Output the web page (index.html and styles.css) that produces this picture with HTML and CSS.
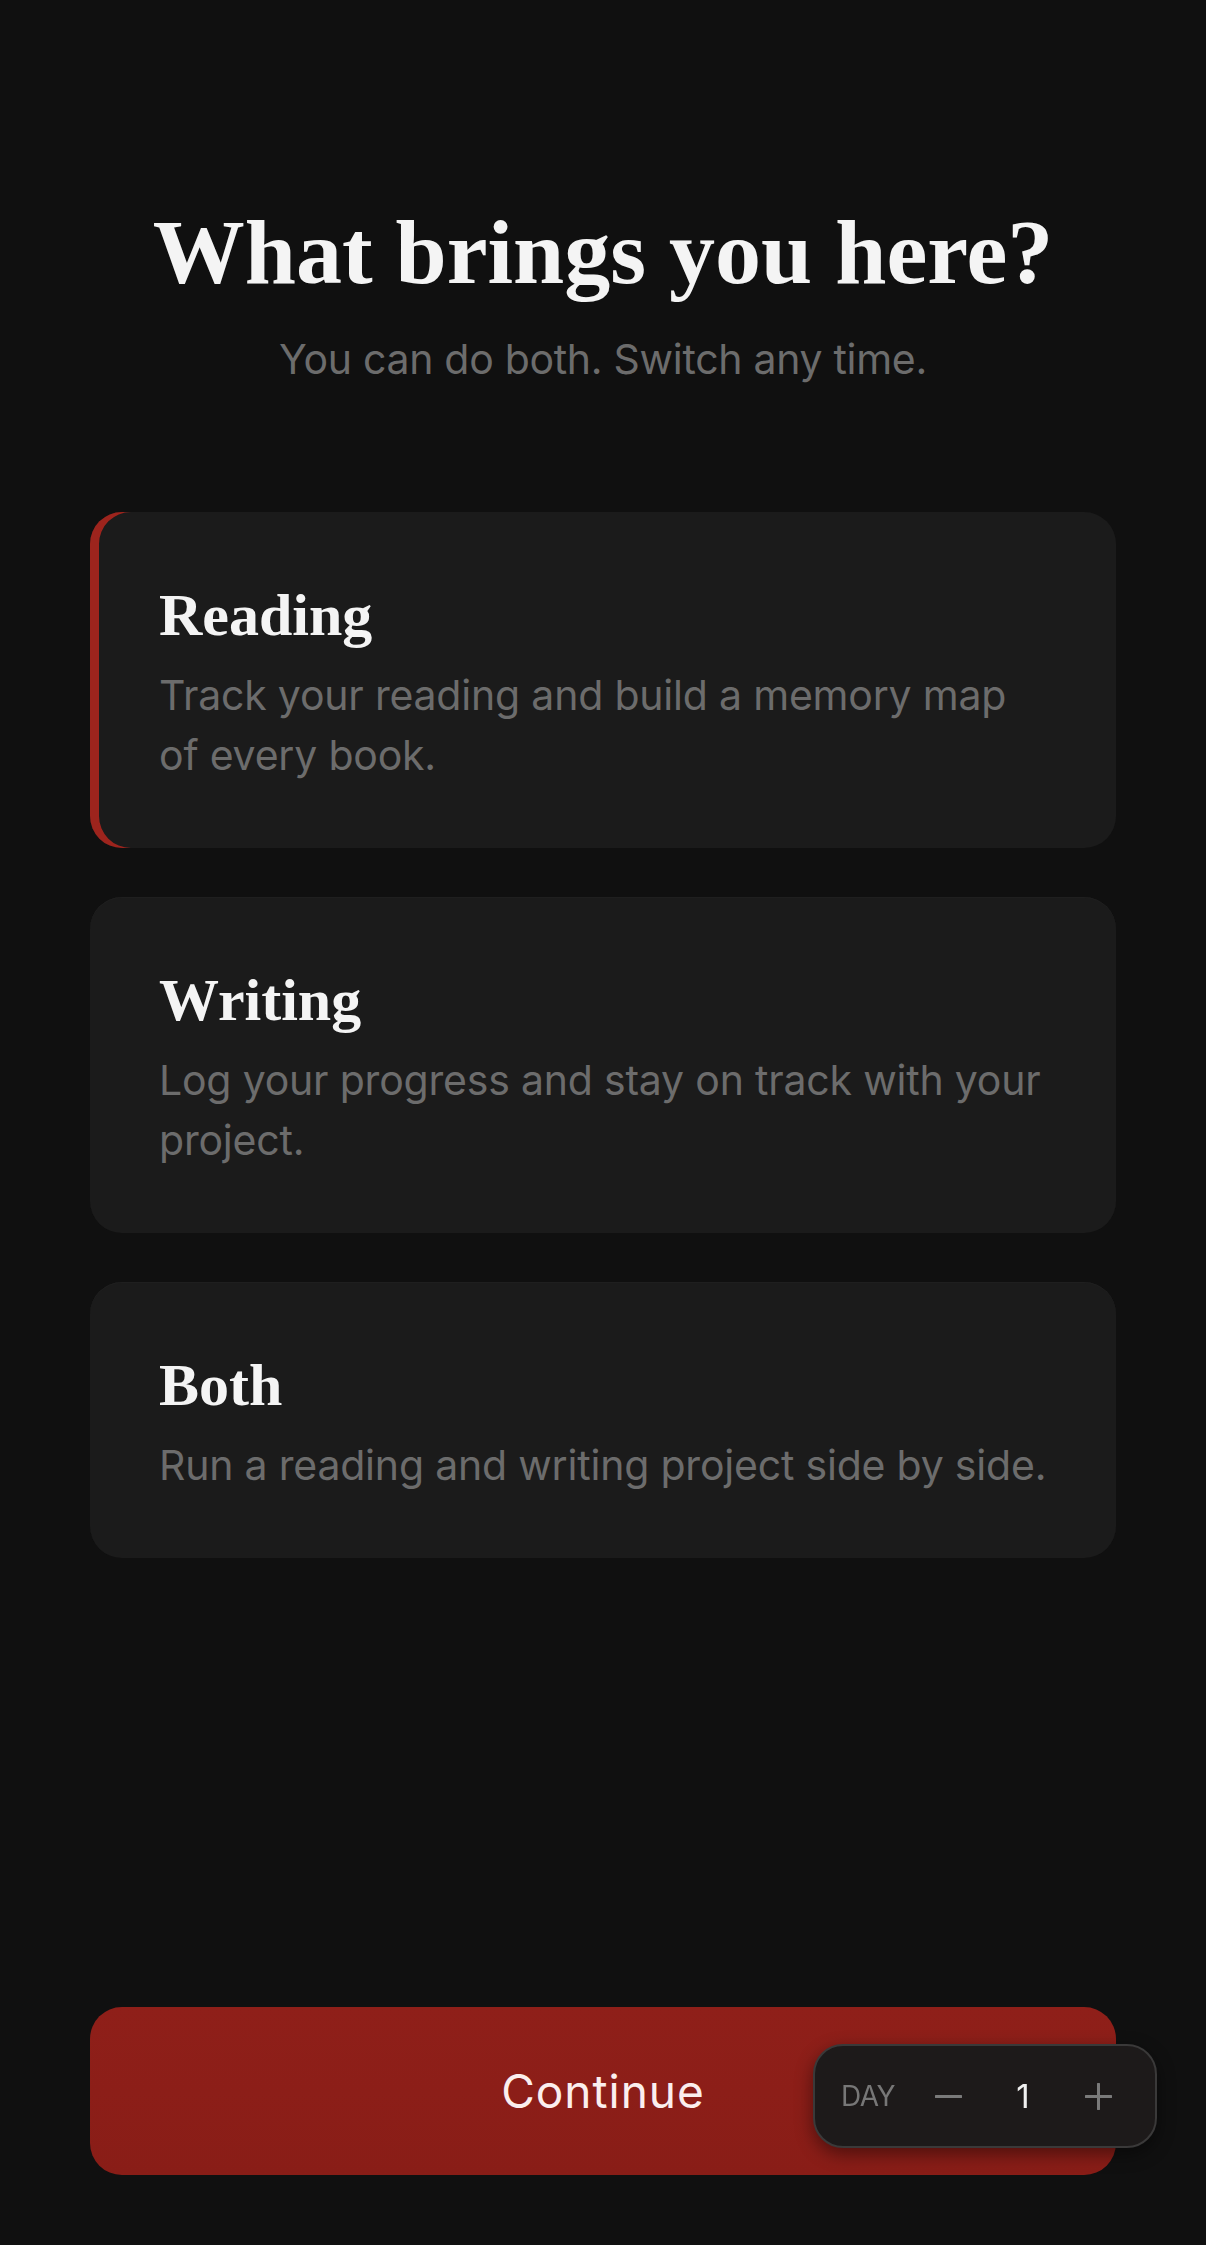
FILE: index.html
```html
<!DOCTYPE html>
<html lang="en">
<head>
    <meta charset="UTF-8">
    <meta name="viewport" content="width=device-width, initial-scale=1.0">
    <title>Onboarding</title>
    <link rel="stylesheet" href="styles.css">
</head>
<body>
    <main class="screen">
        <header class="intro">
            <h1>What brings you here?</h1>
            <p>You can do both. Switch any time.</p>
        </header>

        <div class="options">
            <div class="option selected">
                <h2>Reading</h2>
                <p>Track your reading and build a memory map of every book.</p>
            </div>
            <div class="option">
                <h2>Writing</h2>
                <p>Log your progress and stay on track with your project.</p>
            </div>
            <div class="option">
                <h2>Both</h2>
                <p>Run a reading and writing project side by side.</p>
            </div>
        </div>

        <button class="continue">Continue</button>
    </main>

    <div class="day-picker">
        <span class="day-label">DAY</span>
        <button class="step" aria-label="Previous day">
            <svg width="27" height="27" viewBox="0 0 27 27"><path d="M1 13.5h25" stroke="currentColor" stroke-width="3" stroke-linecap="round"/></svg>
        </button>
        <span class="day-value">1</span>
        <button class="step" aria-label="Next day">
            <svg width="27" height="27" viewBox="0 0 27 27"><path d="M1 13.5h25M13.5 1v25" stroke="currentColor" stroke-width="3" stroke-linecap="round"/></svg>
        </button>
    </div>
</body>
</html>
```

FILE: styles.css
```css
:root {
    --bg-color: #101010;
    --card-bg: #1b1b1b;
    --accent: #8e1f19;
    --accent-line: #9d241d;
    --title-color: #f4f4f4;
    --muted: #6c6c6c;
}

* {
    margin: 0;
    padding: 0;
    box-sizing: border-box;
}

body {
    background-color: var(--bg-color);
    color: var(--title-color);
    font-family: Inter, "Noto Sans", sans-serif;
}

.screen {
    min-height: 100vh;
    display: flex;
    flex-direction: column;
    padding: 203px 90px 70px;
}

.intro {
    text-align: center;
}

.intro h1 {
    font-family: "Liberation Serif", "DejaVu Serif", serif;
    font-weight: 700;
    font-size: 92px;
    line-height: 99px;
    color: var(--title-color);
}

.intro p {
    margin-top: 28px;
    font-size: 41px;
    line-height: 58px;
    color: var(--muted);
    letter-spacing: -0.3px;
}

.options {
    margin-top: 124px;
    display: flex;
    flex-direction: column;
    gap: 49px;
}

.option {
    background-color: var(--card-bg);
    border-radius: 32px;
    padding: 67px 63px 63px 69px;
    box-shadow: inset 0 1px 0 #1f1f1f;
}

.option.selected {
    box-shadow: inset 9px 0 0 var(--accent-line);
}

.option h2 {
    font-family: "Liberation Serif", "DejaVu Serif", serif;
    font-weight: 700;
    font-size: 60px;
    line-height: 72px;
    color: var(--title-color);
}

.option p {
    margin-top: 14px;
    font-size: 41px;
    line-height: 60px;
    color: var(--muted);
    letter-spacing: -0.2px;
}

.continue {
    margin-top: auto;
    height: 168px;
    border: none;
    border-radius: 32px;
    background: linear-gradient(180deg, #8f1f19, #891d17);
    color: #fbeeee;
    font-family: Inter, "Noto Sans", sans-serif;
    font-size: 46px;
    font-weight: 400;
    letter-spacing: 1px;
}

.day-picker {
    position: fixed;
    right: 49px;
    bottom: 97px;
    width: 344px;
    height: 104px;
    display: flex;
    align-items: center;
    padding: 0 22px 0 26px;
    background-color: #1d1a1a;
    border: 2px solid #3a3939;
    border-radius: 30px;
    box-shadow: 0 6px 18px rgba(0,0,0,0.45);
}

.day-label {
    font-size: 28px;
    color: #777;
    letter-spacing: -0.5px;
    width: 72px;
}

.step {
    width: 70px;
    height: 70px;
    border: none;
    background: none;
    color: #7a7a7a;
    display: flex;
    align-items: center;
    justify-content: center;
}

.day-value {
    width: 80px;
    text-align: center;
    font-size: 33px;
    color: #f0f0f0;
}
```
